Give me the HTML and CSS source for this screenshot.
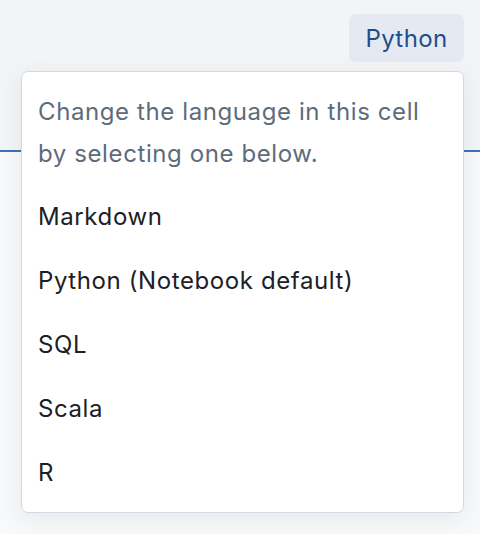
FILE: index.html
```html
<!DOCTYPE html>
<html lang="en">
<head>
    <meta charset="UTF-8">
    <meta name="viewport" content="width=device-width, initial-scale=1.0">
    <title>Cell language</title>
    <link rel="stylesheet" href="styles.css">
</head>
<body>
    <div class="cell">
        <div class="cell-header">
            <button type="button" class="lang-button">Python</button>
        </div>
        <div class="cell-divider"></div>
        <div class="cell-body"></div>

        <div class="lang-menu">
            <p class="lang-hint">Change the language in this cell by selecting one below.</p>
            <ul class="lang-list">
                <li>Markdown</li>
                <li>Python (Notebook default)</li>
                <li>SQL</li>
                <li>Scala</li>
                <li>R</li>
            </ul>
        </div>
    </div>
</body>
</html>
```

FILE: styles.css
```css
body {
    margin: 0;
    background-color: #f7f8fa;
    font-family: Inter, "Noto Sans", sans-serif;
    font-size: 24px;
    letter-spacing: 0.6px;
}
.cell {
    position: relative;
    height: 534px;
}
.cell-header {
    display: flex;
    justify-content: flex-end;
    align-items: flex-start;
    height: 150px;
    padding: 14px 16px 0;
    box-sizing: border-box;
    background-color: #f3f4f6;
}
.lang-button {
    width: 115px;
    height: 48px;
    padding: 0;
    border: none;
    border-radius: 7px;
    background-color: #e5eaf2;
    color: #1f4e8a;
    font-family: inherit;
    font-size: 24px;
    letter-spacing: 0.4px;
    cursor: pointer;
}
.cell-divider {
    height: 2px;
    background-color: #3f72b3;
}
.cell-body {
    height: 382px;
    background-color: #f8f9fa;
}
.lang-menu {
    position: absolute; /* floats over the cell */
    top: 71px;
    left: 21px;
    width: 443px;
    height: 442px;
    box-sizing: border-box;
    padding: 19px 16px 0;
    background-color: #ffffff;
    border: 1px solid #d3d9e3;
    border-radius: 7px;
    box-shadow: 0 6px 24px rgba(30, 40, 60, 0.08);
}
.lang-hint {
    margin: 0 0 10px;
    color: #5e6b7b;
    line-height: 42px;
}
.lang-list {
    list-style: none;
    margin: 0;
    padding: 0;
    color: #1d2026;
}
.lang-list li {
    height: 64px;
    line-height: 64px;
}
```
